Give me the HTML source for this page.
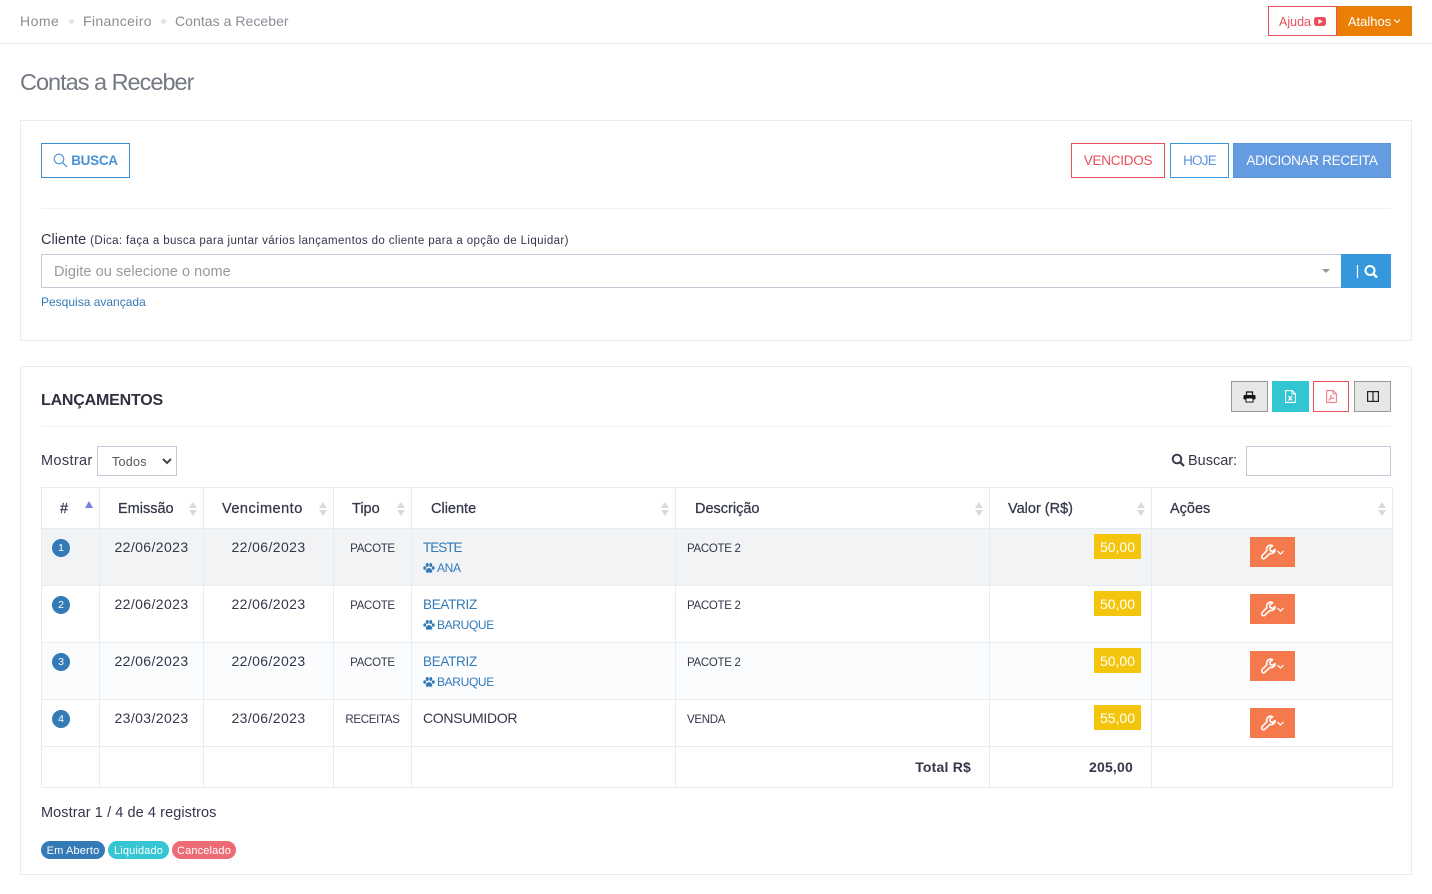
<!DOCTYPE html>
<html lang="pt-BR">
<head>
<meta charset="utf-8">
<title>Contas a Receber</title>
<style>
*{box-sizing:border-box}
html,body{margin:0;padding:0;background:#fff}
body{width:1432px;height:894px;position:relative;overflow:hidden;font-family:"Liberation Sans",Arial,sans-serif;font-size:14px;color:#34364a;letter-spacing:.3px}
.a{position:absolute;white-space:nowrap}
.box{position:absolute;display:flex;align-items:center;justify-content:center;white-space:nowrap}
.topline{position:absolute;left:0;top:43px;width:1432px;height:1px;background:#ebedf2}
.dot{position:absolute;width:5px;height:5px;border-radius:50%;background:#e2e4e9;top:19px}
.crumb{color:#8a8d94;top:12px;line-height:18px;font-size:14px;letter-spacing:.05px}
.card{position:absolute;left:20px;width:1392px;border:1px solid #e7ecf1;background:#fff}
.hr{position:absolute;height:1px;background:#eef1f5}
table{position:absolute;left:41px;top:487px;width:1352px;border-collapse:collapse;table-layout:fixed}
th,td{border:1px solid #e7ecf1;padding:0;vertical-align:top;position:relative}
th{height:41px;font-size:14.5px;font-weight:400;color:#34364a;-webkit-text-stroke:.25px #34364a;letter-spacing:0}
th span{position:absolute;top:11px;line-height:20px;white-space:nowrap}
th i{position:absolute;right:5px;top:14px;width:9px;height:14px}
th i:before{content:"";position:absolute;left:0;top:0;border-left:4.5px solid transparent;border-right:4.5px solid transparent;border-bottom:6px solid #d8d9dd}
th i:after{content:"";position:absolute;left:0;top:8px;border-left:4.5px solid transparent;border-right:4.5px solid transparent;border-top:6px solid #d8d9dd}
tr.r1 td{background:#f1f3f5;height:57px}
tr.r2 td{height:57px;background:#fff}
tr.r3 td{height:57px;background:#fbfcfe}
tr.r4 td{height:47px;background:#fff}
tr.tot td{height:41px;background:#fff}
td .t{position:absolute;top:8px;line-height:20px;white-space:nowrap}
.num{position:absolute;left:10px;top:10px;width:18px;height:18px;border-radius:50%;background:#337ab7;color:#fff;font-size:10.5px;letter-spacing:0;display:flex;align-items:center;justify-content:center}
.c{left:0;right:0;text-align:center;letter-spacing:.4px}
td .t.sm{font-size:11.5px;letter-spacing:-.3px;color:#34364a;top:10px}
td .t.lnk{color:#337ab7;font-size:13.5px;top:9px}
.sub{position:absolute;left:11px;top:30px;line-height:18px;font-size:12px;color:#337ab7;display:flex;align-items:center;white-space:nowrap;letter-spacing:-.35px}
.val{position:absolute;right:10px;top:5px;height:25px;padding-top:1px;background:#f3c60d;color:#fff;font-size:14px;letter-spacing:0;display:flex;align-items:center;justify-content:center;width:47px}
.act{position:absolute;left:98px;top:8px;width:45px;height:30px;background:#f47a4e;display:flex;align-items:center;justify-content:center}
.pill{position:absolute;top:841px;height:18px;border-radius:9px;color:#fff;font-size:11px;line-height:20px;text-align:center;letter-spacing:.15px}
</style>
</head>
<body>
<svg width="0" height="0" style="position:absolute">
<symbol id="paw" viewBox="0 0 24 24"><ellipse cx="3.500" cy="12" rx="2.900" ry="3.600" fill="#337ab7"/><ellipse cx="20.500" cy="12" rx="2.900" ry="3.600" fill="#337ab7"/><ellipse cx="8.500" cy="6" rx="3" ry="4" fill="#337ab7"/><ellipse cx="15.500" cy="6" rx="3" ry="4" fill="#337ab7"/><path d="M12 12c-3.500 0-6.500 4-6.500 6.500 0 2 1.500 3 3 3 1.500 0 2.300-.8 3.500-.8s2 .8 3.500.8c1.500 0 3-1 3-3 0-2.500-3-6.500-6.500-6.500z" fill="#337ab7"/></symbol>
<symbol id="wr" viewBox="0 0 24 16"><path d="M9.500 1.200a4 4 0 0 0-3.600 5.400L1.200 11.500a1.900 1.900 0 0 0 2.700 2.700L8.900 9.400a4 4 0 0 0 5.200-3.900l-2.500 2-2.400-1-.3-2.600 2.700-2.200a4 4 0 0 0-2.100-.5z" fill="none" stroke="#fff" stroke-width="1.600" stroke-linejoin="round"/><path d="M16.500 7l3 3 3-3" fill="none" stroke="#fff" stroke-width="1.200"/></symbol>
</svg>

<!-- top bar -->
<div class="a crumb" style="left:20px;letter-spacing:.5px">Home</div>
<div class="dot" style="left:69px"></div>
<div class="a crumb" style="left:83px;letter-spacing:.35px">Financeiro</div>
<div class="dot" style="left:161px"></div>
<div class="a crumb" style="left:175px">Contas a Receber</div>
<div class="box" style="left:1268px;top:6px;width:69px;height:30px;padding-top:1px;border:1px solid #e7505a;color:#e7505a;font-size:12.5px;letter-spacing:0;gap:3px">Ajuda
<svg width="12" height="9" viewBox="0 0 12 9"><rect width="12" height="9" rx="2.500" fill="#e7505a"/><path d="M4.500 2l4 2.500-4 2.500z" fill="#fff"/></svg></div>
<div class="box" style="left:1337px;top:6px;width:75px;height:30px;background:#ea7f05;color:#fff;font-size:13px;letter-spacing:0;gap:2px">Atalhos
<svg width="8" height="6" viewBox="0 0 8 6"><path d="M1 1.500l3 3 3-3" fill="none" stroke="#fff" stroke-width="1.100"/></svg></div>
<div class="topline"></div>
<div class="a" style="left:20px;top:66px;font-size:23.500px;line-height:32px;color:#747883;letter-spacing:-1px">Contas a Receber</div>

<!-- card 1 -->
<div class="card" style="top:120px;height:221px"></div>
<div class="box" style="left:41px;top:143px;width:89px;height:35px;border:1px solid #3a8dd0;color:#4a90d6;font-weight:700;font-size:13.500px;letter-spacing:-.3px;gap:3px">
<svg width="15" height="15" viewBox="0 0 15 15"><circle cx="6" cy="6" r="4.800" fill="none" stroke="#4a90d6" stroke-width="1.100"/><path d="M9.500 9.500l4.500 4.500" stroke="#4a90d6" stroke-width="1.200"/></svg>BUSCA</div>
<div class="box" style="left:1071px;top:143px;width:94px;height:35px;border:1px solid #e7505a;color:#e7505a;font-size:13.500px;letter-spacing:-.25px">VENCIDOS</div>
<div class="box" style="left:1170px;top:143px;width:59px;height:35px;border:1px solid #3598dc;color:#5a94dc;font-size:13.500px;letter-spacing:-.8px">HOJE</div>
<div class="box" style="left:1233px;top:143px;width:158px;height:35px;background:#659be0;border:1px solid #5c93dd;color:#fff;font-size:13.500px;letter-spacing:-.3px">ADICIONAR RECEITA</div>
<div class="hr" style="left:41px;top:208px;width:1350px"></div>
<div class="a" style="left:41px;top:231px;line-height:18px;font-size:14.500px;letter-spacing:0">Cliente <span style="font-size:11.500px;letter-spacing:.38px">(Dica: faça a busca para juntar vários lançamentos do cliente para a opção de Liquidar)</span></div>
<div class="a" style="left:41px;top:254px;width:1301px;height:34px;border:1px solid #c2cad8"></div>
<div class="a" style="left:54px;top:263px;line-height:18px;color:#999;font-size:14.500px;letter-spacing:.07px">Digite ou selecione o nome</div>
<div class="a" style="left:1322px;top:269px;border-left:4.500px solid transparent;border-right:4.500px solid transparent;border-top:4.500px solid #999"></div>
<div class="box" style="left:1341px;top:254px;width:50px;height:34px;background:#3598dc">
<svg width="24" height="15" viewBox="0 0 24 15"><path d="M3.500 1v13" stroke="#fff" stroke-width="1.200"/><circle cx="16" cy="6.500" r="4.500" fill="none" stroke="#fff" stroke-width="2"/><path d="M19.200 9.700l3.800 3.800" stroke="#fff" stroke-width="2.400"/></svg></div>
<div class="a" style="left:41px;top:294px;line-height:17px;font-size:12px;color:#337ab7;letter-spacing:0">Pesquisa avançada</div>

<!-- card 2 -->
<div class="card" style="top:366px;height:509px"></div>
<div class="a" style="left:41px;top:391px;line-height:20px;font-size:16px;font-weight:700;color:#2f3140;letter-spacing:-.2px">LANÇAMENTOS</div>
<div class="box" style="left:1231px;top:381px;width:37px;height:31px;background:#e7e7e7;border:1px solid #999">
<svg width="13" height="12" viewBox="0 0 13 12"><path d="M3.500 4V1h6v3" fill="none" stroke="#111" stroke-width="1.200"/><rect x=".5" y="4" width="12" height="4.500" rx="1" fill="#111"/><rect x="3" y="7" width="7" height="4" fill="#fff" stroke="#111"/></svg></div>
<div class="box" style="left:1272px;top:381px;width:37px;height:31px;background:#32c5d2">
<svg width="11" height="13" viewBox="0 0 11 13"><path d="M.6.600h6.500l3.300 3.300v8.500H.6z" fill="none" stroke="#fff" stroke-width="1.100"/><path d="M7 .6v3.400h3.400" fill="none" stroke="#fff"/><path d="M3.500 6l3.500 4.500M7 6l-3.500 4.500" stroke="#fff" stroke-width="1.300"/></svg></div>
<div class="box" style="left:1313px;top:381px;width:36px;height:31px;border:1px solid #e7505a">
<svg width="11" height="13" viewBox="0 0 11 13"><path d="M.6.600h6.500l3.300 3.300v8.500H.6z" fill="none" stroke="#ef7f88" stroke-width="1.100"/><path d="M7 .6v3.400h3.400" fill="none" stroke="#ef7f88"/><path d="M2.500 10.500c1.500-1 2.500-4 2.300-5.500.3 2 1.500 3 3.500 3.200-2 0-4.500 1-5.800 2.300z" fill="none" stroke="#ef7f88" stroke-width=".8"/></svg></div>
<div class="box" style="left:1354px;top:381px;width:37px;height:31px;background:#e7e7e7;border:1px solid #999">
<svg width="12" height="11" viewBox="0 0 12 11"><rect x=".6" y=".6" width="10.800" height="9.800" fill="none" stroke="#222" stroke-width="1.200"/><path d="M6 .6v9.800" stroke="#222" stroke-width="1.200"/></svg></div>
<div class="hr" style="left:41px;top:426px;width:1350px"></div>

<div class="a" style="left:41px;top:452px;line-height:18px;font-size:14.500px;letter-spacing:.35px">Mostrar</div>
<div class="a" style="left:97px;top:446px;width:80px;height:30px;border:1px solid #c2cad8"></div>
<div class="a" style="left:112px;top:454px;line-height:17px;font-size:12.500px;color:#555;letter-spacing:.3px">Todos</div>
<svg class="a" style="left:162px;top:458px" width="10" height="7" viewBox="0 0 10 7"><path d="M1 1l4 4 4-4" fill="none" stroke="#444" stroke-width="2"/></svg>
<svg class="a" style="left:1171px;top:453px" width="14" height="14" viewBox="0 0 14 14"><circle cx="6" cy="6" r="4.300" fill="none" stroke="#34364a" stroke-width="1.900"/><path d="M9 9l4 4" stroke="#34364a" stroke-width="2.200"/></svg>
<div class="a" style="left:1188px;top:452px;line-height:18px;font-size:14.500px;letter-spacing:0">Buscar:</div>
<div class="a" style="left:1246px;top:446px;width:145px;height:30px;border:1px solid #c2cad8"></div>

<table>
<colgroup><col style="width:58px"><col style="width:104px"><col style="width:130px"><col style="width:78px"><col style="width:264px"><col style="width:314px"><col style="width:162px"><col style="width:241px"></colgroup>
<thead><tr>
<th><span style="left:18px">#</span><em style="position:absolute;left:43px;top:13px;border-left:4.500px solid transparent;border-right:4.500px solid transparent;border-bottom:7px solid #7b7fe0"></em></th>
<th><span style="left:18px">Emissão</span><i></i></th>
<th><span style="left:18px;letter-spacing:.5px">Vencimento</span><i></i></th>
<th><span style="left:18px">Tipo</span><i></i></th>
<th><span style="left:19px">Cliente</span><i></i></th>
<th><span style="left:19px">Descrição</span><i></i></th>
<th><span style="left:18px">Valor (R$)</span><i></i></th>
<th><span style="left:18px">Ações</span><i></i></th>
</tr></thead>
<tbody>
<tr class="r1">
<td><div class="num">1</div></td>
<td><div class="t c">22/06/2023</div></td>
<td><div class="t c">22/06/2023</div></td>
<td><div class="t c sm">PACOTE</div></td>
<td><div class="t lnk" style="left:11px;letter-spacing:-1px">TESTE</div><div class="sub"><svg width="12" height="12" style="margin-right:2px"><use href="#paw"/></svg>ANA</div></td>
<td><div class="t sm" style="left:11px">PACOTE 2</div></td>
<td><div class="val">50,00</div></td>
<td><div class="act"><svg width="24" height="16"><use href="#wr"/></svg></div></td>
</tr>
<tr class="r2">
<td><div class="num">2</div></td>
<td><div class="t c">22/06/2023</div></td>
<td><div class="t c">22/06/2023</div></td>
<td><div class="t c sm">PACOTE</div></td>
<td><div class="t lnk" style="left:11px;letter-spacing:-.3px">BEATRIZ</div><div class="sub"><svg width="12" height="12" style="margin-right:2px"><use href="#paw"/></svg>BARUQUE</div></td>
<td><div class="t sm" style="left:11px">PACOTE 2</div></td>
<td><div class="val">50,00</div></td>
<td><div class="act"><svg width="24" height="16"><use href="#wr"/></svg></div></td>
</tr>
<tr class="r3">
<td><div class="num">3</div></td>
<td><div class="t c">22/06/2023</div></td>
<td><div class="t c">22/06/2023</div></td>
<td><div class="t c sm">PACOTE</div></td>
<td><div class="t lnk" style="left:11px;letter-spacing:-.3px">BEATRIZ</div><div class="sub"><svg width="12" height="12" style="margin-right:2px"><use href="#paw"/></svg>BARUQUE</div></td>
<td><div class="t sm" style="left:11px">PACOTE 2</div></td>
<td><div class="val">50,00</div></td>
<td><div class="act"><svg width="24" height="16"><use href="#wr"/></svg></div></td>
</tr>
<tr class="r4">
<td><div class="num">4</div></td>
<td><div class="t c">23/03/2023</div></td>
<td><div class="t c">23/06/2023</div></td>
<td><div class="t c sm">RECEITAS</div></td>
<td><div class="t" style="left:11px;letter-spacing:-.3px">CONSUMIDOR</div></td>
<td><div class="t sm" style="left:11px">VENDA</div></td>
<td><div class="val">55,00</div></td>
<td><div class="act"><svg width="24" height="16"><use href="#wr"/></svg></div></td>
</tr>
<tr class="tot">
<td></td><td></td><td></td><td></td><td></td>
<td><div class="t" style="right:18px;top:10px;font-weight:700;letter-spacing:.2px">Total R$</div></td>
<td><div class="t" style="right:18px;top:10px;font-weight:700;letter-spacing:.2px">205,00</div></td>
<td></td>
</tr>
</tbody>
</table>

<div class="a" style="left:41px;top:804px;line-height:18px;font-size:14.500px;letter-spacing:.08px">Mostrar 1 / 4 de 4 registros</div>
<div class="pill" style="left:41px;width:64px;background:#337ab7">Em Aberto</div>
<div class="pill" style="left:108px;width:61px;background:#36c6d3">Liquidado</div>
<div class="pill" style="left:172px;width:64px;background:#ed6b75">Cancelado</div>
</body>
</html>
